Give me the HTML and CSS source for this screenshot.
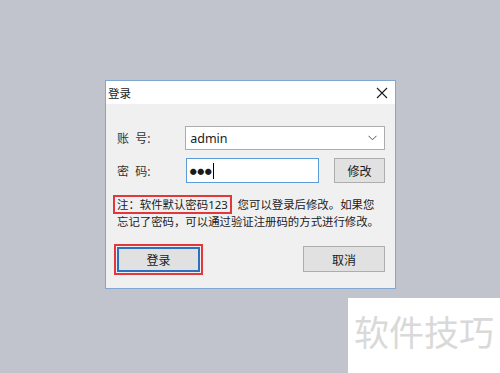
FILE: index.html
```html
<!DOCTYPE html>
<html lang="zh-CN">
<head>
    <meta charset="UTF-8">
    <meta name="viewport" content="width=device-width, initial-scale=1.0">
    <title>登录</title>
    <link rel="stylesheet" href="styles.css">
</head>
<body>
    <div class="desk">
        <div class="dialog">
            <div class="titlebar">
                <span class="title">登录</span>
                <svg class="close" width="12" height="12" viewBox="0 0 12 12">
                    <path d="M1 1 L11 11 M11 1 L1 11" stroke="#1a1a1a" stroke-width="1.1" fill="none"/>
                </svg>
            </div>
            <div class="body">
                <div class="row row-user">
                    <span class="label">账&nbsp;&nbsp;号:</span>
                    <div class="combo">
                        <span>admin</span>
                        <svg width="9" height="6" viewBox="0 0 9 6">
                            <path d="M0.5 0.8 L4.5 4.8 L8.5 0.8" stroke="#555" stroke-width="1" fill="none"/>
                        </svg>
                    </div>
                </div>
                <div class="row row-pass">
                    <span class="label">密&nbsp;&nbsp;码:</span>
                    <div class="pass"><span class="dots">●●●</span><span class="caret"></span></div>
                    <button class="btn btn-edit">修改</button>
                </div>
                <p class="note"><span class="mark">注：软件默认密码123</span>&nbsp;&nbsp;您可以登录后修改。如果您<br>忘记了密码，可以通过验证注册码的方式进行修改。</p>
                <div class="actions">
                    <div class="mark-btn"><button class="btn btn-default">登录</button></div>
                    <button class="btn btn-cancel">取消</button>
                </div>
            </div>
        </div>
    </div>
    <div class="watermark">软件技巧</div>
</body>
</html>
```

FILE: styles.css
```css
body {
    margin: 0;
    padding: 0;
    width: 500px;
    height: 373px;
    overflow: hidden;
    background-color: #c1c4cc;
    font-family: "Noto Sans", "Noto Sans CJK SC", sans-serif;
    color: #1a1a1a;
}
.desk {
    padding: 80px 0 0 105px;
}
.dialog {
    width: 289px;
    height: 207px;
    border: 1px solid #7fa7d2;
    background-color: #f0f0f0;
}
.titlebar {
    height: 23px;
    background-color: #ffffff;
    display: flex;
    align-items: center;
    justify-content: space-between;
    padding: 0 7px 0 2px;
}
.title {
    font-size: 11.5px;
}
.body {
    padding: 22px 10px 0 11px;
    font-size: 11.4px;
}
.row {
    display: flex;
    align-items: center;
}
.label {
    width: 69px;
    font-size: 12px;
    color: #333;
}
.combo {
    width: 189px;
    height: 22px;
    border: 1px solid #acacac;
    background-color: #ffffff;
    display: flex;
    align-items: center;
    justify-content: space-between;
    padding: 0 7px 0 4px;
    font-size: 12.5px;
}
.row-pass {
    margin-top: 8px;
}
.pass {
    width: 129px;
    height: 23px;
    border: 1px solid #5a9bd8;
    background-color: #ffffff;
    display: flex;
    align-items: center;
    padding-left: 3px;
}
.dots {
    font-size: 7px;
    letter-spacing: 0.5px;
}
.caret {
    width: 1px;
    height: 16px;
    background-color: #000;
    margin-left: 1px;
}
.btn {
    font-family: "Noto Sans CJK SC", sans-serif;
    font-size: 12px;
    color: #1a1a1a;
    background-color: #e1e1e1;
    border: 1px solid #adadad;
    padding: 0;
}
.btn-edit {
    width: 51px;
    height: 25px;
    margin-left: 15px;
}
.note {
    margin: 13px 0 0 0;
    line-height: 17px;
    color: #222;
}
.mark {
    border: 2px solid #e2383c;
    padding: 0 2px;
    margin-left: -4px;
}
.actions {
    margin-top: 14px;
    display: flex;
    justify-content: space-between;
    align-items: flex-start;
}
.mark-btn {
    border: 2px solid #e2383c;
    padding: 1px;
    margin-left: -3px;
    line-height: 0;
}
.btn-default {
    width: 83px;
    height: 25px;
    border: 2px solid #2e6fc0;
}
.btn-cancel {
    width: 82px;
    height: 26px;
    margin-top: 2px;
    margin-right: 0;
}
.watermark {
    position: absolute;
    left: 348px;
    top: 298px;
    width: 152px;
    height: 75px;
    background-color: #ffffff;
    color: #d9d9d9;
    font-family: "Noto Sans CJK SC", sans-serif;
    font-size: 35px;
    line-height: 66px;
    padding-left: 6px;
    box-sizing: border-box;
}
```
